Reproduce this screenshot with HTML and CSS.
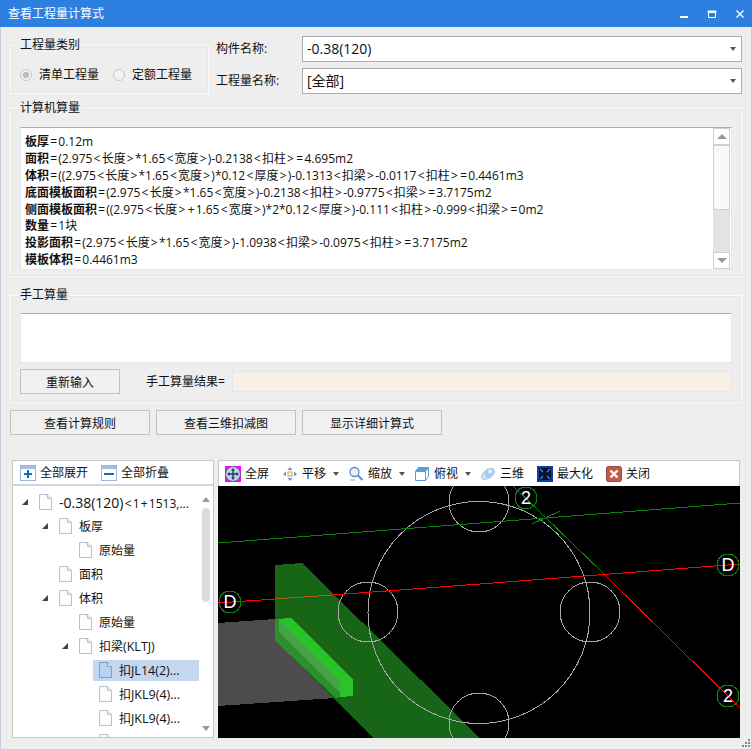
FILE: index.html
```html
<!DOCTYPE html>
<html lang="zh-CN">
<head>
<meta charset="utf-8">
<title>查看工程量计算式</title>
<link rel="stylesheet" href="styles.css">
</head>
<body>
<div class="window">
  <header class="titlebar">
    <span class="title">查看工程量计算式</span>
    <div class="winbtns">
      <svg class="winbtn" viewBox="0 0 10 10"><rect x="1" y="7" width="8" height="2" fill="#fff"/></svg>
      <svg class="winbtn" viewBox="0 0 10 10"><path d="M1.5 2.500h7v6h-7z M1 2h8v1.500H1z" fill="none" stroke="#fff"/></svg>
      <svg class="winbtn" viewBox="0 0 10 10"><path d="M1.500 1.500l7 7M8.500 1.500l-7 7" stroke="#fff" stroke-width="1.400"/></svg>
    </div>
  </header>

  <main class="content">
    <section class="top">
      <fieldset class="group kind">
        <legend>工程量类别</legend>
        <div class="radios">
          <label class="radio"><span class="dot on"></span>清单工程量</label>
          <label class="radio"><span class="dot"></span>定额工程量</label>
        </div>
      </fieldset>
      <div class="fields">
        <div class="field"><span class="flabel">构件名称:</span><div class="combo"><span>-0.38(120)</span><i class="caret"></i></div></div>
        <div class="field"><span class="flabel">工程量名称:</span><div class="combo"><span>[全部]</span><i class="caret"></i></div></div>
      </div>
    </section>

    <fieldset class="group calc">
      <legend>计算机算量</legend>
      <div class="textbox formulas">
        <div class="lines">
          <p><b>板厚</b><i class="op">=</i>0.12m</p>
          <p><b>面积</b><i class="op">=</i>(2.975<i class="op">&lt;</i>长度<i class="op">&gt;</i>*1.65<i class="op">&lt;</i>宽度<i class="op">&gt;</i>)-0.2138<i class="op">&lt;</i>扣柱<i class="op">&gt;</i><i class="op">=</i>4.695m2</p>
          <p><b>体积</b><i class="op">=</i>((2.975<i class="op">&lt;</i>长度<i class="op">&gt;</i>*1.65<i class="op">&lt;</i>宽度<i class="op">&gt;</i>)*0.12<i class="op">&lt;</i>厚度<i class="op">&gt;</i>)-0.1313<i class="op">&lt;</i>扣梁<i class="op">&gt;</i>-0.0117<i class="op">&lt;</i>扣柱<i class="op">&gt;</i><i class="op">=</i>0.4461m3</p>
          <p><b>底面模板面积</b><i class="op">=</i>(2.975<i class="op">&lt;</i>长度<i class="op">&gt;</i>*1.65<i class="op">&lt;</i>宽度<i class="op">&gt;</i>)-0.2138<i class="op">&lt;</i>扣柱<i class="op">&gt;</i>-0.9775<i class="op">&lt;</i>扣梁<i class="op">&gt;</i><i class="op">=</i>3.7175m2</p>
          <p><b>侧面模板面积</b><i class="op">=</i>((2.975<i class="op">&lt;</i>长度<i class="op">&gt;</i><i class="op">+</i>1.65<i class="op">&lt;</i>宽度<i class="op">&gt;</i>)*2*0.12<i class="op">&lt;</i>厚度<i class="op">&gt;</i>)-0.111<i class="op">&lt;</i>扣柱<i class="op">&gt;</i>-0.999<i class="op">&lt;</i>扣梁<i class="op">&gt;</i><i class="op">=</i>0m2</p>
          <p><b>数量</b><i class="op">=</i>1块</p>
          <p><b>投影面积</b><i class="op">=</i>(2.975<i class="op">&lt;</i>长度<i class="op">&gt;</i>*1.65<i class="op">&lt;</i>宽度<i class="op">&gt;</i>)-1.0938<i class="op">&lt;</i>扣梁<i class="op">&gt;</i>-0.0975<i class="op">&lt;</i>扣柱<i class="op">&gt;</i><i class="op">=</i>3.7175m2</p>
          <p><b>模板体积</b><i class="op">=</i>0.4461m3</p>
        </div>
        <div class="vscroll">
          <span class="sbtn"><i class="tri up"></i></span>
          <span class="sthumb"></span>
          <span class="strack"></span>
          <span class="sbtn"><i class="tri down"></i></span>
        </div>
      </div>
    </fieldset>

    <fieldset class="group manual">
      <legend>手工算量</legend>
      <div class="textbox manualbox"></div>
      <div class="manualrow">
        <button class="btn reinput" type="button">重新输入</button>
        <span class="resultlabel">手工算量结果=</span>
        <div class="result"></div>
      </div>
    </fieldset>

    <div class="actions">
      <button class="btn action" type="button">查看计算规则</button>
      <button class="btn action" type="button">查看三维扣减图</button>
      <button class="btn action" type="button">显示详细计算式</button>
    </div>

    <section class="bottom">
      <aside class="treepanel">
        <div class="toolbar treebar">
          <span class="tool"><svg class="ico" viewBox="0 0 16 16"><rect x=".5" y=".5" width="15" height="15" fill="#fff" stroke="#9db4d8"/><rect x="1" y="1" width="14" height="3" fill="#a9bce6"/><path d="M4 9h8M8 5v8" stroke="#0f6cb5" stroke-width="2"/></svg>全部展开</span>
          <span class="tool"><svg class="ico" viewBox="0 0 16 16"><rect x=".5" y=".5" width="15" height="15" fill="#fff" stroke="#9db4d8"/><rect x="1" y="1" width="14" height="3" fill="#a9bce6"/><path d="M3 9h10" stroke="#0f6cb5" stroke-width="2"/></svg>全部折叠</span>
        </div>
        <div class="treebody">
          <ul class="tree">
            <li class="row l0"><i class="arrow"></i><svg class="doc"><use href="#doc"/></svg><span><span class="big">-0.38(120)</span><i class="op">&lt;</i>1<i class="op">+</i>1513,...</span></li>
            <li class="row l1"><i class="arrow"></i><svg class="doc"><use href="#doc"/></svg><span>板厚</span></li>
            <li class="row l2"><svg class="doc"><use href="#doc"/></svg><span>原始量</span></li>
            <li class="row l1"><svg class="doc"><use href="#doc"/></svg><span>面积</span></li>
            <li class="row l1"><i class="arrow"></i><svg class="doc"><use href="#doc"/></svg><span>体积</span></li>
            <li class="row l2"><svg class="doc"><use href="#doc"/></svg><span>原始量</span></li>
            <li class="row l2"><i class="arrow"></i><svg class="doc"><use href="#doc"/></svg><span>扣梁<span class="lat">(KLTJ)</span></span></li>
            <li class="row l3 selected"><svg class="doc"><use href="#docsel"/></svg><span>扣<span class="lat">JL14(2)...</span></span></li>
            <li class="row l3"><svg class="doc"><use href="#doc"/></svg><span>扣<span class="lat">JKL9(4)...</span></span></li>
            <li class="row l3"><svg class="doc"><use href="#doc"/></svg><span>扣<span class="lat">JKL9(4)...</span></span></li>
            <li class="row l3"><svg class="doc"><use href="#doc"/></svg></li>
          </ul>
          <div class="treescroll">
            <i class="tri up small"></i>
            <span class="treethumb"></span>
            <i class="tri down small"></i>
          </div>
        </div>
      </aside>

      <div class="viewer">
        <div class="toolbar viewbar">
          <span class="tool"><svg class="ico" viewBox="0 0 16 16"><rect width="16" height="16" fill="#f0f"/><circle cx="8" cy="8" r="7.500" fill="#c3cfe2" stroke="#55617a"/><path d="M8 3v10M3 8h10" stroke="#1f3f7a" stroke-width="1.500"/><path d="M8 2l2 2.500H6zM8 14l2-2.500H6zM2 8l2.500-2v4zM14 8l-2.500-2v4z" fill="#1f3f7a"/></svg>全屏</span>
          <span class="tool"><svg class="ico" viewBox="0 0 16 16"><rect x="6" y="6" width="4" height="4" fill="#fff" stroke="#e09a4a"/><path d="M8 1l2.500 3h-5zM8 15l2.500-3h-5zM1 8l3-2.500v5zM15 8l-3-2.500v5z" fill="#5b9bd8"/></svg>平移<i class="drop"></i></span>
          <span class="tool"><svg class="ico" viewBox="0 0 16 16"><circle cx="6.500" cy="6" r="4.500" fill="#eaf3fb" stroke="#5b8fc4" stroke-width="1.300"/><path d="M10 9.500l4.500 4.500" stroke="#5b8fc4" stroke-width="2"/><path d="M2 14h5" stroke="#e09a4a"/></svg>缩放<i class="drop"></i></span>
          <span class="tool"><svg class="ico" viewBox="0 0 16 16"><path d="M1.500 5.500h10v9h-10zM1.500 5.500l3-4h10l-3 4M11.500 14.500l3-4v-9" fill="none" stroke="#5b9bd8"/><path d="M1.500 5.500l3-4h10l-3 4z" fill="#5b9bd8"/></svg>俯视<i class="drop"></i></span>
          <span class="tool"><svg class="ico" viewBox="0 0 16 16"><ellipse cx="8" cy="8" rx="7.500" ry="4" transform="rotate(-35 8 8)" fill="#cfe0f5" stroke="#a9c4e8"/><circle cx="9" cy="7" r="4.500" fill="#a9c8ee"/><circle cx="10" cy="5.500" r="2" fill="#e8f1fb"/></svg>三维</span>
          <span class="tool"><svg class="ico" viewBox="0 0 16 16"><rect width="16" height="16" fill="#0a3fa8"/><rect x="2" y="2" width="12" height="12" fill="#06112e"/><path d="M3 3l3 3M13 3l-3 3M3 13l3-3M13 13l-3-3" stroke="#3f8fe0" stroke-width="1.200"/></svg>最大化</span>
          <span class="tool"><svg class="ico" viewBox="0 0 16 16"><rect x=".5" y=".5" width="15" height="15" rx="2" fill="#c65a4a" stroke="#8f4a3a"/><path d="M4.500 4.500l7 7M11.500 4.500l-7 7" stroke="#fff" stroke-width="2.400"/></svg>关闭</span>
        </div>
        <svg class="canvas" viewBox="218 486 522 252" preserveAspectRatio="none">
          <polygon points="218,623 275,619 275,641 335,698 218,706" fill="#4c4c4c"/>
          <polygon points="275,565 302,563 480,738 374,738 275,641" fill="#166616"/>
          <polygon points="277,619 291,618 353,679 353,696 340,697 338,697 276,636 276,620" fill="#2ac42a"/>
          <polygon points="275,620 277,619 340,681 340,697 336,698 275,641" fill="#2f8f2f"/>
          <polygon points="279,620 340,681 340,692 279,632" fill="#45a545"/>
          <g class="wire">
            <circle cx="479" cy="612.500" r="111"/>
            <circle cx="368" cy="612" r="30"/>
            <circle cx="590" cy="612" r="30"/>
            <circle cx="479" cy="502" r="30"/>
            <circle cx="479" cy="723" r="30"/>
          </g>
          <path class="gline" d="M218 543L480 523L740 503"/>
          <path class="rline" d="M218 603L275 599"/>
          <path class="oline" d="M275 599L332 595"/>
          <path class="rline" d="M332 595L480 584L740 564"/>
          <path class="gthin" d="M513 486L604 574M532 524L560 511"/>
          <path class="rthin" d="M604 574L740 708"/>
          <g class="marker">
            <circle cx="230" cy="602" r="11"/>
            <circle cx="526" cy="498" r="11"/>
            <circle cx="728" cy="565" r="11"/>
            <circle cx="728" cy="696" r="11"/>
          </g>
          <g class="mtext">
            <text x="230" y="608">D</text>
            <text x="526" y="504">2</text>
            <text x="728" y="571">D</text>
            <text x="728" y="702">2</text>
          </g>
        </svg>
      </div>
    </section>
  </main>
  <svg class="grip" viewBox="0 0 10 10"><path d="M7 1h2v2H7zM4 4h2v2H4zM7 4h2v2H7zM1 7h2v2H1zM4 7h2v2H4zM7 7h2v2H7z" fill="#8a8a8a"/></svg>
</div>

<svg class="defs" width="0" height="0">
  <defs>
    <symbol id="doc" viewBox="0 0 13 16"><path d="M.5.500h8l4 4v11h-12z" fill="#fdfdfd" stroke="#b6c2d2"/><path d="M8.500.500v4h4" fill="#e6ecf4" stroke="#b6c2d2"/></symbol>
    <symbol id="docsel" viewBox="0 0 13 16"><path d="M.5.500h8l4 4v11h-12z" fill="#b5d5f7" stroke="#7f9fc6"/><path d="M8.500.500v4h4" fill="#e6ecf4" stroke="#7f9fc6"/></symbol>
  </defs>
</svg>
</body>
</html>
```
FILE: styles.css
```css
* { box-sizing: border-box; }
html, body { margin: 0; padding: 0; }
body {
  width: 752px;
  height: 750px;
  overflow: hidden;
  font-family: "Open Sans", "Noto Sans CJK SC", sans-serif;
  font-size: 12px;
  color: #111;
  background: #eee;
}
.window {
  position: relative;
  width: 752px;
  height: 750px;
  display: flex;
  flex-direction: column;
  background: #eee;
  border-left: 1px solid #c3cbdc;
  border-right: 1px solid #c3cbdc;
  border-bottom: 1px solid #c3cbdc;
}
.titlebar {
  height: 27px;
  margin: 0 -1px;
  flex: none;
  display: flex;
  align-items: center;
  justify-content: space-between;
  padding: 0 8px;
  background: #2d7fe0;
  color: #fff;
}
.title { font-size: 12px; line-height: 27px; }
.winbtns { display: flex; gap: 18px; margin-right: -1px; }
.winbtn { width: 10px; height: 10px; display: block; }
.content {
  flex: 1;
  min-height: 0;
  padding: 9px 9px 0 9px;
  display: flex;
  flex-direction: column;
}
.op { font-style: normal; padding: 0 1.200px; }
fieldset.group {
  margin: 0;
  padding: 0;
  min-width: 0;
  border: 1px solid #fbfbfb;
  box-shadow: inset 0 0 0 1px #e6e6e6;
}
fieldset.group legend {
  margin-left: 7px;
  padding: 0 2px;
  line-height: 18px;
  height: 18px;
  font-size: 12px;
}
.top { display: flex; height: 58px; flex: none; }
.kind { width: 199px; height: 58px; flex: none; }
.radios { display: flex; gap: 14px; padding: 12px 0 0 9px; }
.radio { display: flex; align-items: center; gap: 7px; line-height: 18px; }
.dot {
  width: 12px;
  height: 12px;
  border-radius: 50%;
  border: 1px solid #c6c6c6;
  background: #f2f2f2;
  display: block;
}
.dot.on { background: radial-gradient(circle, #bdbdbd 0 3px, #f2f2f2 3.500px); }
.fields { flex: 1; display: flex; flex-direction: column; gap: 6px; padding-left: 7px; }
.field { display: flex; align-items: center; height: 26px; }
.flabel { width: 86px; flex: none; line-height: 26px; }
.combo {
  width: 440px;
  height: 26px;
  display: flex;
  align-items: center;
  justify-content: space-between;
  padding: 0 5px 0 4px;
  background: #fff;
  border: 1px solid #adadad;
  font-size: 14px;
  line-height: 24px;
}
.caret {
  width: 0;
  height: 0;
  border: 3px solid transparent;
  border-top: 4px solid #555;
  border-bottom: 0;
  display: block;
}
fieldset.calc { height: 178px; margin-top: 5px; flex: none; }
.textbox {
  margin: 9px 9px 0 9px;
  background: #fff;
  border: 1px solid #e3e7ee;
  border-top-color: #adadad;
}
.formulas { height: 143px; margin-top: 10px; display: flex; padding: 5px 1px 0 4px; }
.lines { flex: 1; }
.lines p { margin: 0; height: 16.900px; line-height: 17px; white-space: nowrap; }
.lines b { font-weight: 700; }
.vscroll {
  width: 17px;
  flex: none;
  margin-top: -5px;
  display: flex;
  flex-direction: column;
  height: 141px;
}
.sbtn {
  height: 17px;
  flex: none;
  display: flex;
  align-items: center;
  justify-content: center;
  background: #fff;
  border: 1px solid #cfcfcf;
}
.sthumb { height: 65px; flex: none; background: #f9f9f9; border: 1px solid #cfcfcf; }
.strack { flex: 1; background: #e3e3e3; }
.tri { display: block; width: 0; height: 0; border-left: 5px solid transparent; border-right: 5px solid transparent; }
.tri.up { border-bottom: 5px solid #999; }
.tri.down { border-top: 5px solid #999; }
.tri.small { border-left-width: 4px; border-right-width: 4px; }
fieldset.manual { height: 117px; margin-top: 9px; flex: none; }
.manualbox { height: 50px; }
.manualrow { display: flex; align-items: center; margin: 6px 9px 0 9px; }
.btn {
  font: inherit;
  color: #111;
  background: #f0f0f0;
  border: 1px solid #c2c2c2;
  padding: 0;
}
.reinput { width: 100px; height: 25px; }
.resultlabel { margin-left: 26px; width: 86px; flex: none; line-height: 17px; }
.result { flex: 1; height: 21px; background: #f8efe6; border: 1px solid #e6e6e6; }
.actions { display: flex; gap: 6px; margin-top: 7px; flex: none; }
.action { width: 140px; height: 25px; }
.bottom {
  display: flex;
  gap: 4px;
  margin: 25px 0 0 2px;
  height: 278px;
  flex: none;
}
.treepanel {
  width: 202px;
  flex: none;
  display: flex;
  flex-direction: column;
  background: #fff;
  border: 1px solid #c8c8c8;
}
.toolbar { display: flex; align-items: center; background: #fff; flex: none; }
.treebar { height: 25px; padding-left: 7px; gap: 13px; border-bottom: 2px solid #d4d4d4; }
.tool { display: flex; align-items: center; gap: 4px; white-space: nowrap; line-height: 18px; }
.ico { width: 16px; height: 16px; display: block; flex: none; }
.treebody { flex: 1; min-height: 0; display: flex; overflow: hidden; }
.tree { list-style: none; margin: 0; padding: 4px 0 0 0; flex: 1; min-width: 0; }
.row {
  height: 24px;
  display: flex;
  align-items: center;
  position: relative;
  white-space: nowrap;
  color: #111;
}
.row .doc { width: 13px; height: 16px; flex: none; margin-right: 7px; }
.row.l0 { padding-left: 26px; }
.row.l1 { padding-left: 46px; }
.row.l2 { padding-left: 66px; }
.row.l3 { padding-left: 86px; }
.arrow {
  position: absolute;
  margin-left: -17px;
  width: 0;
  height: 0;
  border-left: 6px solid transparent;
  border-bottom: 6px solid #444;
}
.lat { font-size: 12.500px; }
.big { font-size: 14px; }
.row.selected { background: linear-gradient(#c5d7ee, #c5d7ee) 80px 2px / 106px 21px no-repeat; }
.treescroll {
  width: 10px;
  flex: none;
  margin-right: 2px;
  display: flex;
  flex-direction: column;
  align-items: center;
  padding: 11px 0 6px 0;
  gap: 6px;
}
.treethumb { width: 8px; height: 94px; background: #dcdcdc; border-radius: 4px; flex: none; margin-bottom: auto; }
.viewer {
  width: 522px;
  flex: none;
  display: flex;
  flex-direction: column;
  border-top: 1px solid #c8c8c8;
}
.viewbar {
  height: 25px;
  padding-left: 6px;
  gap: 13px;
  border-left: 1px solid #c8c8c8;
  border-right: 1px solid #c8c8c8;
}
.drop {
  width: 0;
  height: 0;
  border: 3px solid transparent;
  border-top: 4px solid #555;
  border-bottom: 0;
  margin-left: 3px;
  margin-right: -4px;
  display: block;
}
.canvas { width: 522px; height: 252px; display: block; background: #000; flex: none; shape-rendering: crispEdges; }
.wire circle { fill: none; stroke: #a8a8a8; stroke-width: 1; }
.gline { fill: none; stroke: #0c800c; stroke-width: 1; }
.rline { fill: none; stroke: #f00; stroke-width: 1; }
.oline { fill: none; stroke: #a8620e; stroke-width: 1; }
.gthin { fill: none; stroke: #0c800c; stroke-width: 1; }
.rthin { fill: none; stroke: #f00; stroke-width: 1; }
.marker circle { fill: none; stroke: #0c800c; stroke-width: 1; }
.mtext text {
  fill: #fff;
  font-family: "Liberation Sans", sans-serif;
  font-size: 18px;
  text-anchor: middle;
}
.grip { position: absolute; right: 0; bottom: 1px; width: 10px; height: 10px; }
.defs { position: absolute; }
```
